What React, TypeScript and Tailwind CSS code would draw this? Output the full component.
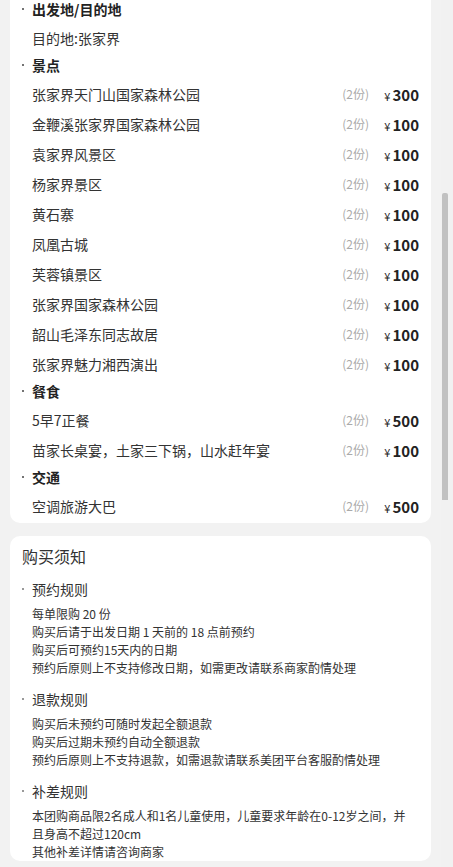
type Item = { name: string; price?: number };

interface Section {
  title: string;
  items: Item[];
}

const sections: Section[] = [
  { title: '出发地/目的地', items: [{ name: '目的地:张家界' }] },
  {
    title: '景点',
    items: [
      { name: '张家界天门山国家森林公园', price: 300 },
      { name: '金鞭溪张家界国家森林公园', price: 100 },
      { name: '袁家界风景区', price: 100 },
      { name: '杨家界景区', price: 100 },
      { name: '黄石寨', price: 100 },
      { name: '凤凰古城', price: 100 },
      { name: '芙蓉镇景区', price: 100 },
      { name: '张家界国家森林公园', price: 100 },
      { name: '韶山毛泽东同志故居', price: 100 },
      { name: '张家界魅力湘西演出', price: 100 },
    ],
  },
  {
    title: '餐食',
    items: [
      { name: '5早7正餐', price: 500 },
      { name: '苗家长桌宴，土家三下锅，山水赶年宴', price: 100 },
    ],
  },
  { title: '交通', items: [{ name: '空调旅游大巴', price: 500 }] },
];

const rules = [
  {
    title: '预约规则',
    lines: [
      '每单限购 20 份',
      '购买后请于出发日期 1 天前的 18 点前预约',
      '购买后可预约15天内的日期',
      '预约后原则上不支持修改日期，如需更改请联系商家酌情处理',
    ],
  },
  {
    title: '退款规则',
    lines: [
      '购买后未预约可随时发起全额退款',
      '购买后过期未预约自动全额退款',
      '预约后原则上不支持退款，如需退款请联系美团平台客服酌情处理',
    ],
  },
  {
    title: '补差规则',
    lines: [
      '本团购商品限2名成人和1名儿童使用，儿童要求年龄在0-12岁之间，并且身高不超过120cm',
      '其他补差详情请咨询商家',
    ],
  },
];

function Dot({ className }: { className: string }) {
  return (
    <span className="flex w-[10px] shrink-0 items-center">
      <span className={`h-[2px] w-[2px] rounded-full ${className}`} />
    </span>
  );
}

export default function App() {
  return (
    <div
      className="flex h-[867px] w-[453px] overflow-hidden bg-[#f2f2f2]"
      style={{ fontFamily: '"Noto Sans CJK SC", "Liberation Sans", sans-serif' }}
    >
      <div className="w-[441px] shrink-0">
        {/* 套餐内容 */}
        <div className="mx-[10px] -mt-[3px] rounded-b-[10px] bg-white px-[12px] pb-[2px]">
          {sections.map((s) => (
            <div key={s.title}>
              <div className="flex h-[26px] items-center pb-[2px] text-[14px] font-bold text-[#222]">
                <Dot className="bg-[#444]" />
                <span>{s.title}</span>
              </div>
              {s.items.map((it) => (
                <div key={it.name} className="flex h-[30px] items-center pl-[10px]">
                  <span className="flex-1 text-[14px] text-[#333]">{it.name}</span>
                  {it.price !== undefined && (
                    <>
                      <span className="mr-[2px] text-[12px] text-[#aaa]">(2份)</span>
                      <span className="w-[48px] text-right text-[#222]">
                        <span className="mr-[2px] text-[11px]">¥</span>
                        <span className="text-[15px] font-semibold">{it.price}</span>
                      </span>
                    </>
                  )}
                </div>
              ))}
            </div>
          ))}
        </div>

        {/* 购买须知 */}
        <div className="mx-[10px] mt-[13px] rounded-[10px] bg-white px-[12px] pt-[8px]">
          <div className="h-[24px] text-[16px] leading-[24px] text-[#333]">购买须知</div>
          <div className="mt-[8px] -mb-[2px] flex flex-col gap-[9px]">
            {rules.map((r) => (
              <div key={r.title}>
                <div className="flex h-[26px] items-center text-[14px] text-[#333]">
                  <Dot className="bg-[#777]" />
                  <span>{r.title}</span>
                </div>
                <div className="mt-[3px] w-[390px] pl-[10px] text-[12px] leading-[18px] text-[#333]">
                  {r.lines.map((l) => (
                    <p key={l}>{l}</p>
                  ))}
                </div>
              </div>
            ))}
          </div>
        </div>
      </div>

      {/* scrollbar */}
      <div className="w-[12px] shrink-0 bg-[#f1f1f1]">
        <div className="ml-[1px] mt-[193px] h-[307px] w-[6px] rounded-t-[2px] bg-[#c1c1c1]" />
      </div>
    </div>
  );
}
